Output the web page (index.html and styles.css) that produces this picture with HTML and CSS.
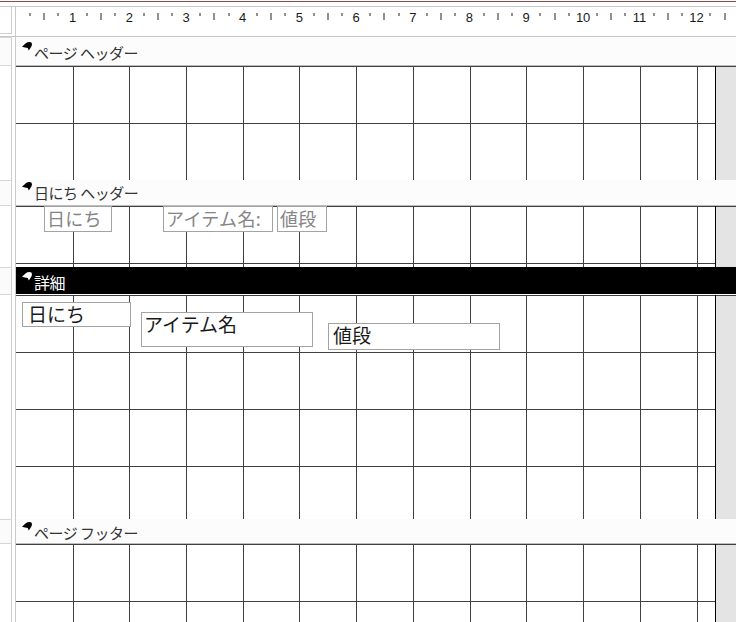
FILE: index.html
```html
<!DOCTYPE html>
<html lang="ja">
<head>
<meta charset="utf-8">
<title>レポート デザイン</title>
<link rel="stylesheet" href="styles.css">
</head>
<body>
<div class="top"></div>

<div class="row ruler-row">
  <div class="lcell"><div class="lbox corner"></div></div>
  <div class="ruler">
    <div class="cm"><span class="s"><i class="t"></i></span><span class="s"><i class="l"></i></span><span class="s"><i class="t"></i></span><span class="s"><b class="n">1</b></span></div>
    <div class="cm"><span class="s"><i class="t"></i></span><span class="s"><i class="l"></i></span><span class="s"><i class="t"></i></span><span class="s"><b class="n">2</b></span></div>
    <div class="cm"><span class="s"><i class="t"></i></span><span class="s"><i class="l"></i></span><span class="s"><i class="t"></i></span><span class="s"><b class="n">3</b></span></div>
    <div class="cm"><span class="s"><i class="t"></i></span><span class="s"><i class="l"></i></span><span class="s"><i class="t"></i></span><span class="s"><b class="n">4</b></span></div>
    <div class="cm"><span class="s"><i class="t"></i></span><span class="s"><i class="l"></i></span><span class="s"><i class="t"></i></span><span class="s"><b class="n">5</b></span></div>
    <div class="cm"><span class="s"><i class="t"></i></span><span class="s"><i class="l"></i></span><span class="s"><i class="t"></i></span><span class="s"><b class="n">6</b></span></div>
    <div class="cm"><span class="s"><i class="t"></i></span><span class="s"><i class="l"></i></span><span class="s"><i class="t"></i></span><span class="s"><b class="n">7</b></span></div>
    <div class="cm"><span class="s"><i class="t"></i></span><span class="s"><i class="l"></i></span><span class="s"><i class="t"></i></span><span class="s"><b class="n">8</b></span></div>
    <div class="cm"><span class="s"><i class="t"></i></span><span class="s"><i class="l"></i></span><span class="s"><i class="t"></i></span><span class="s"><b class="n">9</b></span></div>
    <div class="cm"><span class="s"><i class="t"></i></span><span class="s"><i class="l"></i></span><span class="s"><i class="t"></i></span><span class="s"><b class="n">10</b></span></div>
    <div class="cm"><span class="s"><i class="t"></i></span><span class="s"><i class="l"></i></span><span class="s"><i class="t"></i></span><span class="s"><b class="n">11</b></span></div>
    <div class="cm"><span class="s"><i class="t"></i></span><span class="s"><i class="l"></i></span><span class="s"><i class="t"></i></span><span class="s"><b class="n">12</b></span></div>
    <div class="cm"><span class="s"><i class="t"></i></span><span class="s"><i class="l"></i></span></div>
  </div>
</div>

<!-- ページ ヘッダー -->
<div class="row bar b-ph">
  <div class="lcell"><div class="lbox boxed"></div></div>
  <div class="lab">
    <svg class="sel" viewBox="0 0 9 8" width="10" height="9"><path d="M0 4.2 L3.4 1.1 Q4.8 0 6.8 0 Q9 0.1 9 2 Q8.9 3.9 7.6 5.4 L6.1 7.6 L5.2 5.3 Q2.8 5.1 0 4.2 Z"/></svg>
    <span class="name">ページ ヘッダー</span>
  </div>
</div>
<div class="row g-ph">
  <div class="lcell"><div class="lbox"></div></div>
  <div class="canvas"></div>
  <div class="gutter"></div>
</div>

<!-- 日にち ヘッダー -->
<div class="row bar b-gh">
  <div class="lcell"><div class="lbox boxed"></div></div>
  <div class="lab">
    <svg class="sel" viewBox="0 0 9 8" width="10" height="9"><path d="M0 4.2 L3.4 1.1 Q4.8 0 6.8 0 Q9 0.1 9 2 Q8.9 3.9 7.6 5.4 L6.1 7.6 L5.2 5.3 Q2.8 5.1 0 4.2 Z"/></svg>
    <span class="name">日にち ヘッダー</span>
  </div>
</div>
<div class="row g-gh">
  <div class="lcell"><div class="lbox"></div></div>
  <div class="canvas">
    <div class="ctl lbl gh-date">日にち</div>
    <div class="ctl lbl gh-item">アイテム名:</div>
    <div class="ctl lbl gh-price">値段</div>
  </div>
  <div class="gutter"></div>
</div>

<!-- 詳細 -->
<div class="row bar b-det">
  <div class="lcell"><div class="lbox boxed"></div></div>
  <div class="lab dark">
    <svg class="sel" viewBox="0 0 9 8" width="10" height="9"><path d="M0 4.2 L3.4 1.1 Q4.8 0 6.8 0 Q9 0.1 9 2 Q8.9 3.9 7.6 5.4 L6.1 7.6 L5.2 5.3 Q2.8 5.1 0 4.2 Z"/></svg>
    <span class="name">詳細</span>
  </div>
</div>
<div class="row g-det">
  <div class="lcell"><div class="lbox"></div></div>
  <div class="canvas">
    <div class="ctl txt d-date">日にち</div>
    <div class="ctl txt d-item">アイテム名</div>
    <div class="ctl txt d-price">値段</div>
  </div>
  <div class="gutter"></div>
</div>

<!-- ページ フッター -->
<div class="row bar b-pf">
  <div class="lcell"><div class="lbox boxed"></div></div>
  <div class="lab">
    <svg class="sel" viewBox="0 0 9 8" width="10" height="9"><path d="M0 4.2 L3.4 1.1 Q4.8 0 6.8 0 Q9 0.1 9 2 Q8.9 3.9 7.6 5.4 L6.1 7.6 L5.2 5.3 Q2.8 5.1 0 4.2 Z"/></svg>
    <span class="name">ページ フッター</span>
  </div>
</div>
<div class="row g-pf">
  <div class="lcell"><div class="lbox"></div></div>
  <div class="canvas"></div>
  <div class="gutter"></div>
</div>
</body>
</html>
```

FILE: styles.css
```css
* { box-sizing: border-box; margin: 0; padding: 0; }
html, body { width: 736px; height: 622px; overflow: hidden; background: #fff; }
body { font-family: "Noto Sans CJK JP", "Noto Sans", sans-serif; color: #333; }

.top { height: 6px; background: linear-gradient(#fff 0 1px, #8a4b4b 1px 2px, #fff 2px); }

.row { display: flex; }

/* left vertical ruler strip */
.lcell { width: 16px; flex: none; border-right: 1px solid #c9c9c9; background: #fff; }
.lbox { width: 12px; height: 100%; border-right: 1px solid #cfcfcf; }
.lbox.corner { height: 27px; border-bottom: 1px solid #cfcfcf; }
.lbox.boxed { background: #fbfbfb; border-top: 1px solid #d6d6d6; border-bottom: 1px solid #d6d6d6; }

/* horizontal ruler */
.ruler-row { height: 31px; border-top: 1px solid #c6c6c6; border-bottom: 1px solid #c6c6c6; }
.ruler { flex: 1; display: flex; padding-top: 6px; overflow: hidden; }
.cm { flex: none; width: 56.69px; display: flex; height: 12px; }
.s { flex: 0 0 14.17px; display: flex; justify-content: flex-end; align-items: flex-start; }
.s > * { transform: translateX(50%); }
.t { display: block; width: 1px; height: 3px; background: #222; }
.l { display: block; width: 1px; height: 7px; background: #222; }
.n { font: 13px/10px "Liberation Sans", Arial, sans-serif; color: #1a1a1a; font-weight: normal; }

/* section bars */
.bar .lab {
  flex: 1; display: flex; align-items: flex-start;
  padding-left: 6px; background: #fcfcfc;
  box-shadow: inset 0 -1px #bdbdbd;
}
.lab .sel { flex: none; fill: #000; }
.lab .name {
  margin-left: 2px; margin-top: 3px;
  font-size: 15px; line-height: 15px; letter-spacing: -0.5px;
  color: #333; white-space: nowrap;
}
.lab.dark { background: #000; border-bottom: 1px solid #fff; box-shadow: none; }
.lab.dark .sel { fill: #fff; }
.lab.dark .name { color: #fff; font-size: 16px; }

.b-ph { height: 29px; }
.b-ph .lab { padding-top: 5px; }
.b-gh { height: 26px; }
.b-gh .lab { padding-top: 2px; }
.b-det { height: 28px; }
.b-det .lab { padding-top: 5px; }
.b-pf { height: 25px; }
.b-pf .lab { padding-top: 3px; }

.g-ph { height: 114px; }
.g-gh { height: 61px; }
.g-det { height: 224px; }
.g-pf { height: 78px; }

/* design grid */
.canvas {
  width: 700px; flex: none; position: relative;
  border-right: 1px solid #000;
  background-color: #fff;
  background-image:
    repeating-linear-gradient(to bottom, #404040 0 1px, transparent 1px 57px),
    linear-gradient(#404040, #404040), linear-gradient(#404040, #404040),
    linear-gradient(#404040, #404040), linear-gradient(#404040, #404040),
    linear-gradient(#404040, #404040), linear-gradient(#404040, #404040),
    linear-gradient(#404040, #404040), linear-gradient(#404040, #404040),
    linear-gradient(#404040, #404040), linear-gradient(#404040, #404040),
    linear-gradient(#404040, #404040), linear-gradient(#404040, #404040);
  background-size: 100% 100%, 1px 100%, 1px 100%, 1px 100%, 1px 100%, 1px 100%, 1px 100%,
    1px 100%, 1px 100%, 1px 100%, 1px 100%, 1px 100%, 1px 100%;
  background-position: 0 0, 57px 0, 113px 0, 170px 0, 227px 0, 283px 0, 340px 0,
    397px 0, 454px 0, 510px 0, 567px 0, 624px 0, 681px 0;
  background-repeat: no-repeat;
}
.gutter { flex: 1; background: #e4e4e4; border-top: 1px solid #404040; }

/* controls on the design canvas */
.ctl {
  position: absolute; background: #fff; border: 1px solid #a3a3a3;
  white-space: nowrap;
}
.lbl { color: #858585; font-size: 18px; line-height: 22px; padding-left: 2px; letter-spacing: 0.3px; }
.txt { color: #1a1a1a; font-size: 19px; line-height: 21px; }

.gh-date { left: 28px; top: 0; width: 68px; height: 26px; }
.gh-item { left: 147px; top: 0; width: 110px; height: 26px; }
.gh-price { left: 261px; top: 0; width: 50px; height: 26px; }

.d-date { left: 6px; top: 7px; width: 109px; height: 25px; padding-left: 5px; }
.d-item { left: 125px; top: 17px; width: 172px; height: 35px; padding-left: 2px; }
.d-price { left: 312px; top: 28px; width: 172px; height: 27px; padding-left: 4px; }
```
